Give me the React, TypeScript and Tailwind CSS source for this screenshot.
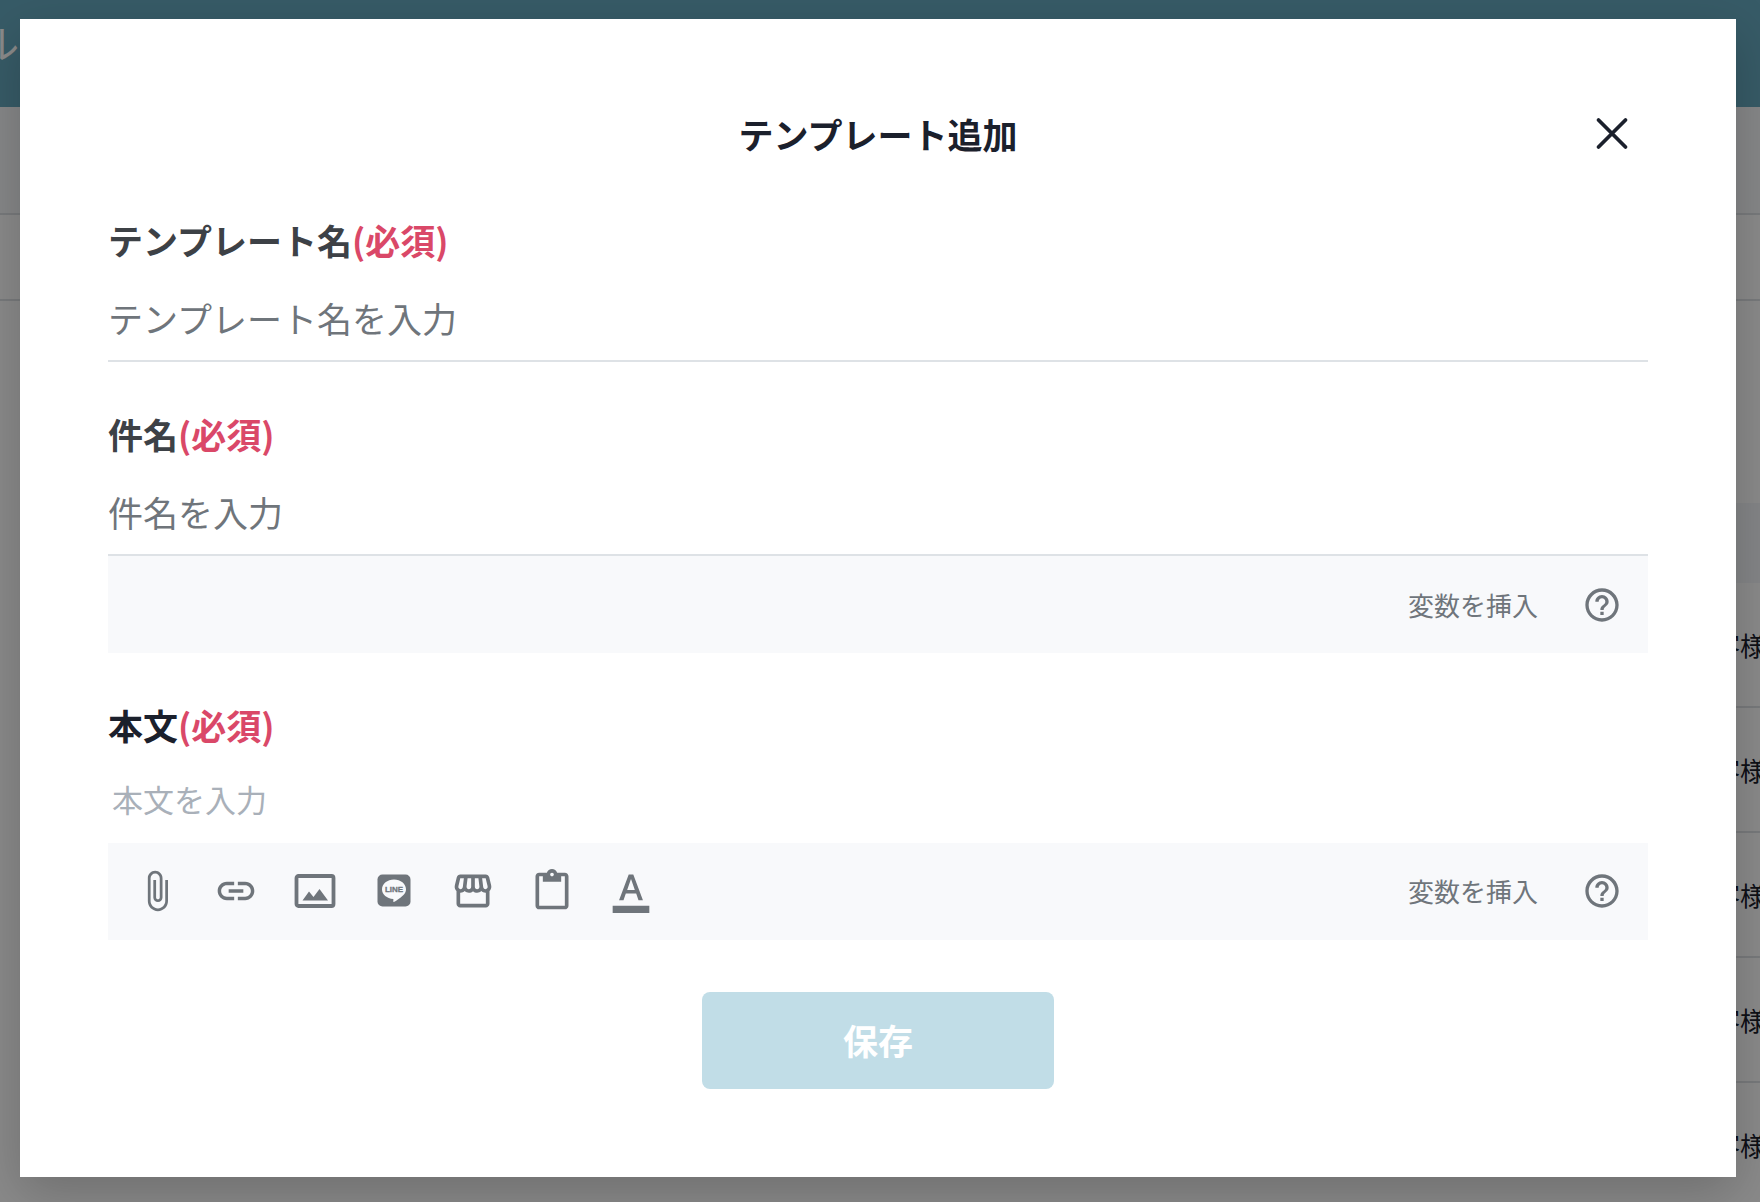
import React from "react";
import {
  MdAttachFile,
  MdLink,
  MdOutlineStorefront,
  MdContentPaste,
  MdFormatColorText,
  MdHelpOutline,
} from "react-icons/md";

const rows = [1, 2, 3, 4, 5];

function ImageIcon() {
  return (
    <svg width="42" height="36" viewBox="0 0 42 36" fill="currentColor">
      <rect x="2.5" y="3" width="37" height="30" rx="2" fill="none" stroke="currentColor" strokeWidth="3.8" />
      <path d="M8.5 27.5L15 18.5L19.5 24L25.5 16L34 27.5Z" />
    </svg>
  );
}

function LineIcon() {
  return (
    <svg width="34" height="34" viewBox="0 0 34 34" fill="currentColor">
      <rect x="0.5" y="0.5" width="33" height="32" rx="5" />
      <path
        d="M17 5.5C23.6 5.5 29 9.8 29 15.2C29 17.500 28 19.400 26.200 21.300C23.400 24.100 18 27.700 16.800 27.900C15.800 28 16.700 25.700 16.300 24.900C9.800 24.500 5 20.400 5 15.200C5 9.800 10.400 5.500 17 5.500Z"
        fill="#f8f9fb"
      />
      <text x="17" y="18" textAnchor="middle" fontSize="8" fontWeight="700" stroke="currentColor" strokeWidth="0.3" className="font-['Liberation_Sans']">
        LINE
      </text>
    </svg>
  );
}

const tools = [
  { name: "ファイルを添付", icon: <MdAttachFile className="size-11" /> },
  { name: "リンク", icon: <MdLink className="size-11" /> },
  { name: "画像", icon: <ImageIcon /> },
  { name: "LINE", icon: <LineIcon /> },
  { name: "店舗", icon: <MdOutlineStorefront className="size-11" /> },
  { name: "貼り付け", icon: <MdContentPaste className="size-11" /> },
  { name: "文字色", icon: <MdFormatColorText className="size-11" /> },
];

function Required() {
  return <span className="text-[#da4868]">(必須)</span>;
}

function VariableActions() {
  return (
    <div className="ml-auto flex items-center gap-11">
      <button type="button" className="text-[26px] leading-10">
        変数を挿入
      </button>
      <button type="button" aria-label="ヘルプ">
        <MdHelpOutline className="size-10" />
      </button>
    </div>
  );
}

function Background() {
  return (
    <div aria-hidden="true" className="absolute inset-0 overflow-hidden bg-white text-[#1b202c]">
      <div className="h-[107px] bg-[#67a8be] pt-4 text-white">
        <p className="-ml-[101px] text-[40px] leading-[52px]">メール</p>
      </div>
      <div className="h-27 border-b-2 border-[#dee2e6] bg-[#f8f9fb]"></div>
      <div className="h-[86px] border-b-2 border-[#dee2e6]"></div>
      <div className="h-[202px]"></div>
      <div className="ml-auto h-20 w-1/2 bg-[#f4f6fa]"></div>
      {rows.map((row) => (
        <div key={row} className="ml-auto flex h-[125px] w-1/2 items-center justify-end border-b-2 border-[#dee2e6]">
          <p className="-mr-1.5 text-[26px] whitespace-nowrap">お客様</p>
        </div>
      ))}
    </div>
  );
}

export default function App() {
  return (
    <div className="relative min-h-screen overflow-hidden font-['Noto_Sans_CJK_JP',sans-serif]">
      <Background />
      <div className="relative flex min-h-screen flex-col bg-black/46 pt-[19px] pr-[24px] pb-[25px] pl-[20px]">
        <section
          role="dialog"
          aria-labelledby="dialog-title"
          className="flex-1 bg-white px-22 pt-[87px] pb-22 text-[#6f757b] shadow-[0_16px_48px_rgba(0,0,0,0.2)]"
        >
          <div className="relative flex items-center justify-center">
            <h1 id="dialog-title" className="text-[35px] leading-[56px] font-bold text-[#1b202c]">
              テンプレート追加
            </h1>
            <button type="button" aria-label="閉じる" className="absolute right-[19px] text-[#1b202c]">
              <svg width="34" height="34" viewBox="0 0 34 34" stroke="currentColor" strokeWidth="3.8" strokeLinecap="round">
                <path d="M3.5 3L30.5 30M30.5 3L3.5 30" />
              </svg>
            </button>
          </div>

          <form>
            <div className="mt-[50px] border-b-2 border-[#dee2e6]">
              <label htmlFor="template-name" className="block text-[35px] leading-[56px] font-bold text-[#3d4146]">
                テンプレート名<Required />
              </label>
              <input
                id="template-name"
                type="text"
                placeholder="テンプレート名を入力"
                className="mt-4 block h-[76px] w-full pb-2.5 text-[35px] outline-none placeholder:text-[#6f757b]"
              />
            </div>

            <div className="mt-11 border-b-2 border-[#dee2e6]">
              <label htmlFor="subject" className="block text-[35px] leading-[56px] font-bold text-[#3d4146]">
                件名<Required />
              </label>
              <input
                id="subject"
                type="text"
                placeholder="件名を入力"
                className="mt-4 block h-[76px] w-full pb-2.5 text-[35px] outline-none placeholder:text-[#6f757b]"
              />
            </div>
            <div className="flex h-[97px] items-center bg-[#f8f9fb] pr-[26px]">
              <VariableActions />
            </div>

            <label htmlFor="body" className="mt-11 block text-[35px] leading-[56px] font-bold text-[#1b202c]">
              本文<Required />
            </label>
            <textarea
              id="body"
              rows={1}
              placeholder="本文を入力"
              className="mt-[22px] block h-17 w-full resize-none px-1 text-[31px] leading-[48px] outline-none placeholder:text-[#a9b0b9]"
            />
            <div className="flex h-[97px] items-center bg-[#f8f9fb] pr-[26px] pb-0.5 pl-[21px]">
              <div className="flex items-center gap-[23px]">
                {tools.map((tool) => (
                  <button key={tool.name} type="button" aria-label={tool.name} className="flex size-14 items-center justify-center">
                    {tool.icon}
                  </button>
                ))}
              </div>
              <VariableActions />
            </div>

            <button
              type="submit"
              className="mx-auto mt-[52px] block h-[97px] w-88 rounded-lg bg-[#c1dde7] text-[35px] font-bold text-white"
            >
              保存
            </button>
          </form>
        </section>
      </div>
    </div>
  );
}
